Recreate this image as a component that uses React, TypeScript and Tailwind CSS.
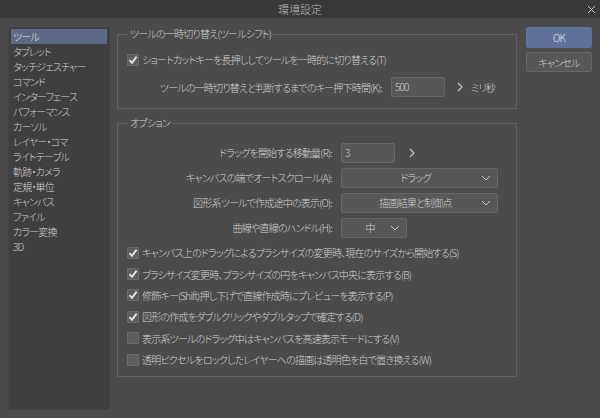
import React from 'react';

const font = "font-['Noto_Sans_CJK_JP','Noto_Sans',sans-serif] [font-feature-settings:'palt']";

const menuItems = [
  'ツール',
  'タブレット',
  'タッチジェスチャー',
  'コマンド',
  'インターフェース',
  'パフォーマンス',
  'カーソル',
  'レイヤー・コマ',
  'ライトテーブル',
  '軌跡・カメラ',
  '定規・単位',
  'キャンバス',
  'ファイル',
  'カラー変換',
  '3D',
];

const checks: [string, boolean][] = [
  ['キャンバス上のドラッグによるブラシサイズの変更時、現在のサイズから開始する(S)', true],
  ['ブラシサイズ変更時、ブラシサイズの円をキャンバス中央に表示する(B)', true],
  ['修飾キー(Shift)押し下げで直線作成時にプレビューを表示する(P)', true],
  ['図形の作成をダブルクリックやダブルタップで確定する(D)', true],
  ['表示系ツールのドラッグ中はキャンバスを高速表示モードにする(V)', false],
  ['透明ピクセルをロックしたレイヤーへの描画は透明色を白で置き換える(W)', false],
];

function Check({ checked, label }: { checked: boolean; label: string }) {
  return (
    <div className="flex items-center gap-[3px] h-[21.4px]">
      <div className="w-[12px] h-[12px] bg-[#5d5d5d] border border-[#6b6b6b] rounded-[1px] flex items-center justify-center">
        {checked && (
          <svg width="10" height="10" viewBox="0 0 10 10">
            <path d="M1.5 5.2 L4 7.8 L8.6 1.6" fill="none" stroke="#e6e6e6" strokeWidth="1.8" />
          </svg>
        )}
      </div>
      <span className="whitespace-nowrap">{label}</span>
    </div>
  );
}

function Chevron() {
  return (
    <svg width="10" height="6" viewBox="0 0 10 6">
      <path d="M1 1 L5 5 L9 1" fill="none" stroke="#c8c8c8" strokeWidth="1" />
    </svg>
  );
}

function Arrow() {
  return (
    <svg width="6" height="10" viewBox="0 0 6 10">
      <path d="M1 1 L5 5 L1 9" fill="none" stroke="#c8c8c8" strokeWidth="1.2" />
    </svg>
  );
}

function Select({ value, width }: { value: string; width: string }) {
  return (
    <div className={`${width} h-[20px] bg-[#575757] border border-[#666666] rounded-[2px] flex items-center pl-2 pr-[6px]`}>
      <span className="flex-1 text-center">{value}</span>
      <Chevron />
    </div>
  );
}

function Row({ label, children }: { label: string; children: React.ReactNode }) {
  return (
    <div className="flex items-center h-[25px] gap-[9px]">
      <div className="w-[205px] text-right whitespace-nowrap">{label}</div>
      {children}
    </div>
  );
}

export default function App() {
  return (
    <div className={`w-[600px] h-[418px] bg-[#4b4b4b] text-[#d2d2d2] text-[10px] tracking-[-0.8px] font-light leading-[15px] flex flex-col overflow-hidden ${font}`}>
      <div className="h-[18px] bg-[#393939] grid grid-cols-[1fr_auto_1fr] items-center">
        <div />
        <div className="text-[#b8b8b8] text-[11px] tracking-[0px]">環境設定</div>
        <div className="flex justify-end pr-[4px]">
          <svg width="9" height="9" viewBox="0 0 9 9">
            <path d="M1 1 L8 8 M8 1 L1 8" stroke="#c0c0c0" strokeWidth="1" />
          </svg>
        </div>
      </div>

      <div className="flex-1 flex pt-[9px] pb-[8px] pl-[8px]">
        <div className="w-[102px] bg-[#3f3f3f] border border-[#444] pt-[1px] px-[2px]">
          {menuItems.map((m, i) => (
            <div
              key={m}
              className={`h-[15px] pl-[2px] whitespace-nowrap ${i === 0 ? 'bg-[#5e6a85] text-[#e8e8e8]' : ''}`}
            >
              {m}
            </div>
          ))}
        </div>

        <div className="w-[400px] ml-[7px] flex flex-col">
          <fieldset className="h-[82px] border border-[#616161] px-[9px]">
            <legend className="ml-[1px] px-[2px] leading-[14px]">ツールの一時切り替え(ツールシフト)</legend>
            <div className="mt-[8px]">
              <Check checked label="ショートカットキーを長押ししてツールを一時的に切り替える(T)" />
            </div>
            <div className="flex items-center mt-[7px] h-[20px]">
              <div className="w-[255px] text-right whitespace-nowrap">ツールの一時切り替えと判断するまでのキー押下時間(K):</div>
              <div className="ml-[9px] w-[54px] h-[20px] bg-[#575757] border border-[#666666] rounded-[2px] pl-[3px] leading-[18px]">500</div>
              <div className="ml-[12px]"><Arrow /></div>
              <div className="ml-[8px]">ミリ秒</div>
            </div>
          </fieldset>

          <fieldset className="h-[261px] mt-[7px] border border-[#616161] px-[9px]">
            <legend className="ml-[1px] px-[2px] leading-[14px]">オプション</legend>
            <div className="mt-[10px]">
              <Row label="ドラッグを開始する移動量(R):">
                <div className="w-[54px] h-[20px] bg-[#575757] border border-[#666666] rounded-[2px] pl-[3px] leading-[18px]">3</div>
                <div className="ml-[5px]"><Arrow /></div>
              </Row>
              <Row label="キャンバスの端でオートスクロール(A):">
                <Select value="ドラッグ" width="w-[157px]" />
              </Row>
              <Row label="図形系ツールで作成途中の表示(O):">
                <Select value="描画結果と制御点" width="w-[157px]" />
              </Row>
              <Row label="曲線や直線のハンドル(H):">
                <Select value="中" width="w-[66px]" />
              </Row>
            </div>
            <div className="mt-[2px]">
              {checks.map(([l, c]) => (
                <Check key={l} checked={c} label={l} />
              ))}
            </div>
          </fieldset>
        </div>

        <div className="ml-[9px] w-[66px] flex flex-col gap-[4px]">
          <div className="h-[21px] bg-[#60719a] rounded-[2px] flex items-center justify-center text-[#e2e6ee]">OK</div>
          <div className="h-[20px] bg-[#575757] border border-[#666666] rounded-[2px] flex items-center justify-center">キャンセル</div>
        </div>
      </div>
    </div>
  );
}
